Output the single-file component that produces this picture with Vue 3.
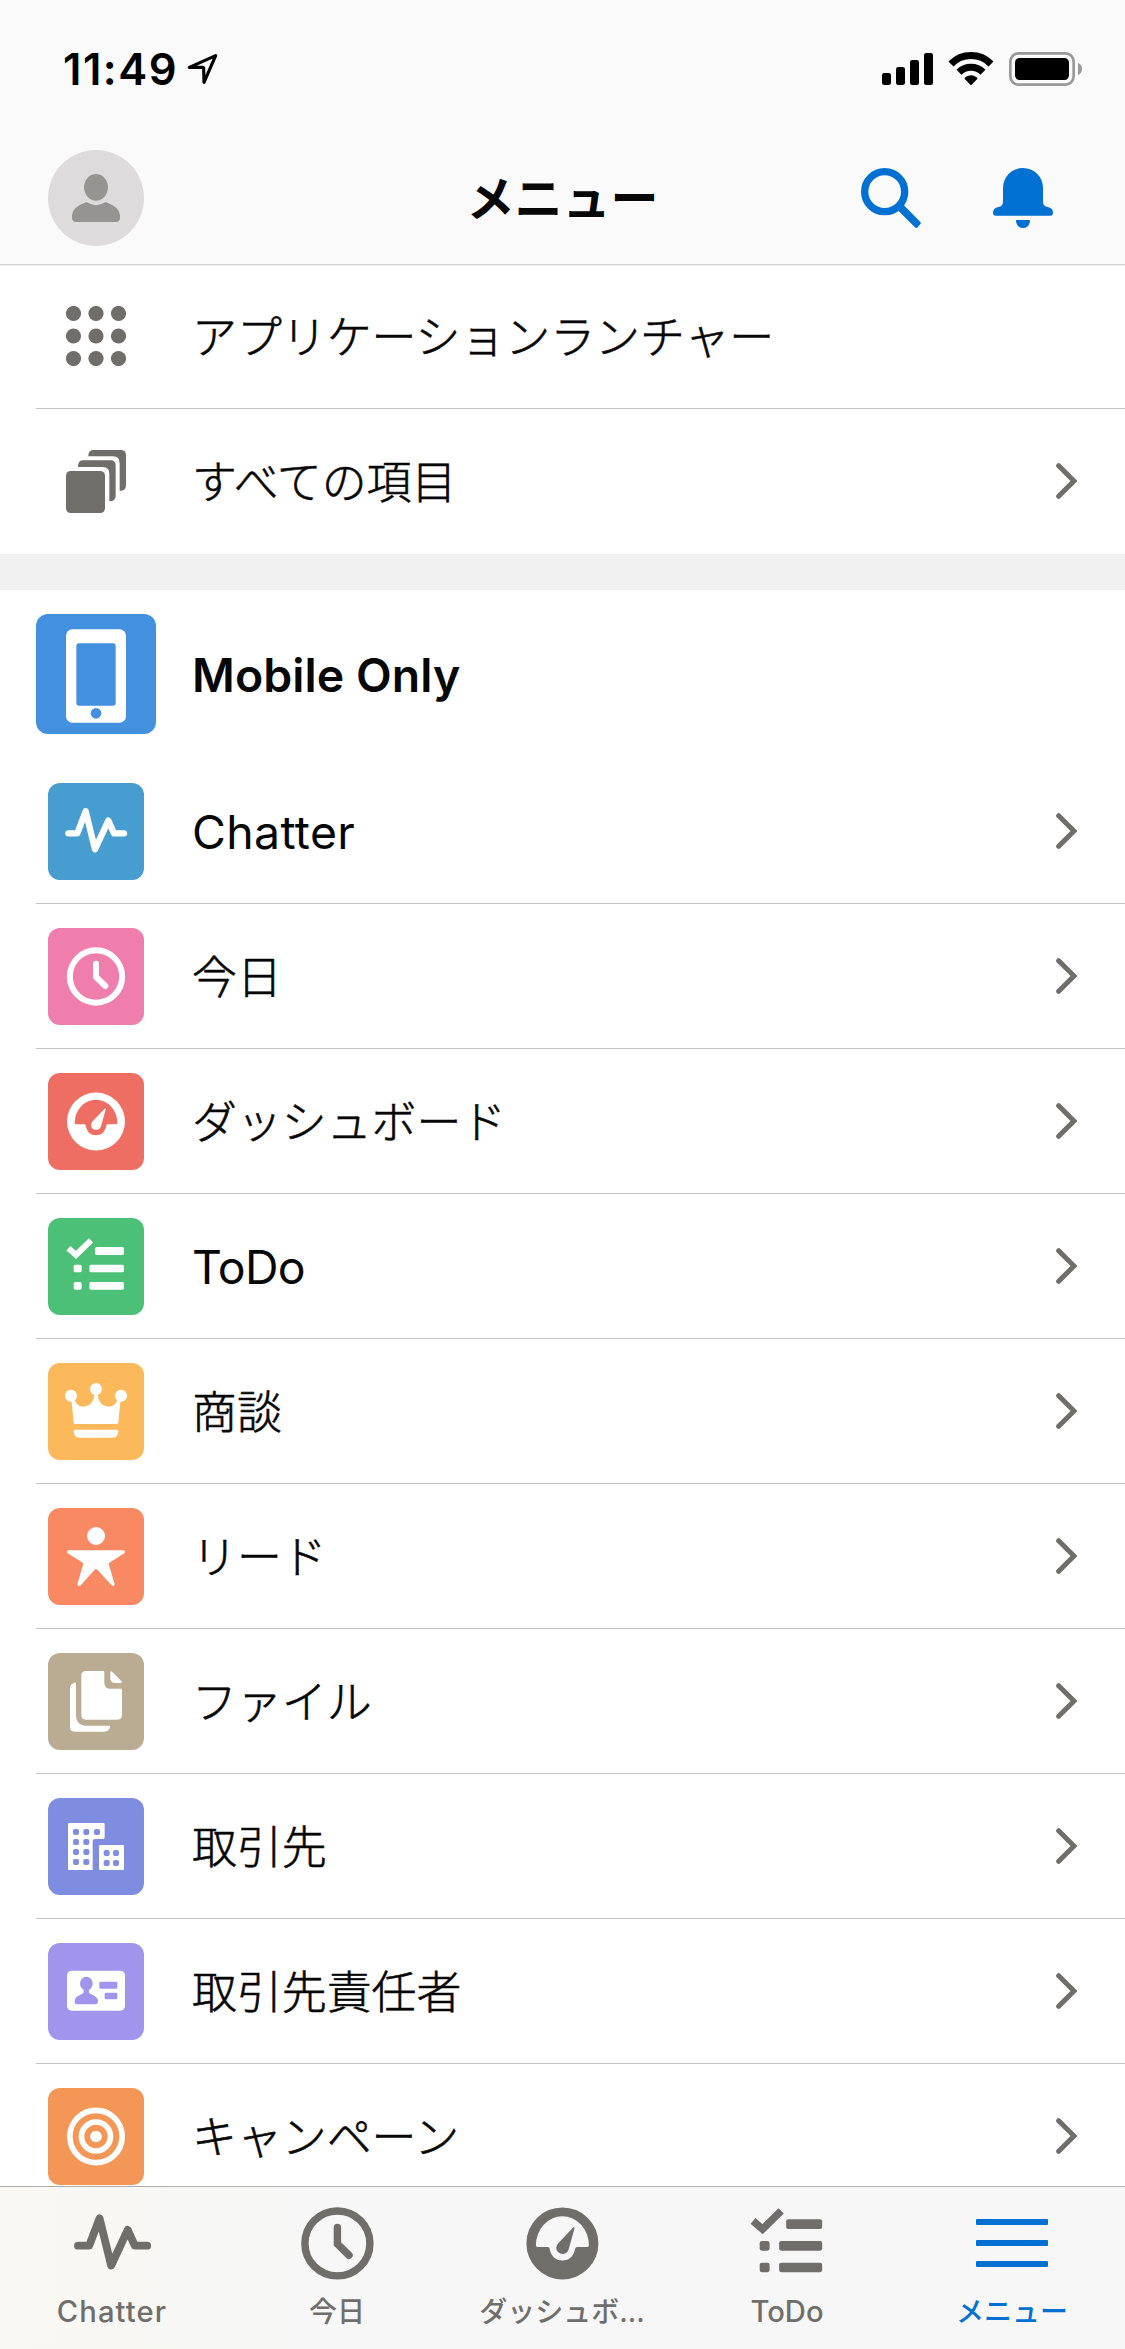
<script setup>
const ring = (r, w) =>
  `<circle cx="144" cy="145.5" r="${r}" fill="none" stroke="currentColor" stroke-width="${w}"/>`

const windows = [
  [84, 102], [115, 102], [147, 102],
  [84, 132], [115, 132],
  [84, 162], [115, 162],
  [84, 192], [115, 192],
  [176, 165], [204, 165],
  [176, 195], [204, 195],
].map(([x, y]) => `<rect x="${x - 9}" y="${y - 9}" width="18" height="18" rx="6" fill="var(--tile)"/>`).join('')

// Glyphs share one 288 x 291 canvas, centred on 144, 145.5.
const glyphs = {
  pulse: '<path d="M61 151H88L113 85L141 199L181 113L198 151H228" fill="none" stroke="currentColor" stroke-width="19" stroke-linecap="round" stroke-linejoin="round"/>',
  clock: ring(78.5, 18) + '<path d="M144 107V147L172 174" fill="none" stroke="currentColor" stroke-width="18" stroke-linecap="round"/>',
  gauge: '<path fill-rule="evenodd" d="M144 58.5a87 87 0 1 1 0 174a87 87 0 1 1 0-174ZM80 150Q80 154 84 154H109Q112 154 113 158Q119 187 144 187Q169 187 175 158Q176 154 179 154H204Q208 154 208 150A64 70 0 0 0 80 150Z"/><path d="M170 107Q174 104 173 110L159 160Q155 171 144 171Q130 169 129 156Q130 149 134 145Z"/>',
  tasks: '<path d="M61 91L84 111L129 67" fill="none" stroke="currentColor" stroke-width="18"/><rect x="141" y="87" width="87" height="24" rx="5"/><rect x="77" y="140" width="24" height="23" rx="5"/><rect x="124" y="140" width="104" height="23" rx="5"/><rect x="77" y="192" width="24" height="23" rx="5"/><rect x="124" y="192" width="104" height="23" rx="5"/>',
  crown: '<circle cx="69" cy="98" r="18"/><circle cx="144" cy="78" r="18"/><circle cx="219" cy="98" r="18"/><path d="M70 108L77 179Q78 183 82 183H206Q210 183 211 179L218 108L208 112Q200 131 183 131Q150 129 149 90H139Q138 129 105 131Q88 131 80 112Z"/><path d="M77 204Q77 200 81 200H207Q211 200 211 204Q210 224 194 224H94Q78 224 77 204Z"/>',
  lead: '<circle cx="144" cy="84" r="27"/><path d="M62 127H226Q234 130 229 136L184 164Q182 167 183 171L200 229Q199 236 192 233L148 185Q144 181 140 185L97 233Q90 236 88 229L105 171Q106 167 104 164L59 136Q54 130 62 127Z"/>',
  files: '<path d="M114 54H166Q169 54 169 58V89Q169 107 187 107H218Q222 107 222 111V186Q222 200 208 200H114Q100 200 100 186V68Q100 54 114 54Z"/><path d="M187 57Q188 53 192 56L221 85Q224 90 218 90H201Q187 90 187 76Z"/><path d="M80 89Q84 88 84 92V190Q86 216 110 218H183Q188 218 186 222Q182 236 170 236H80Q66 236 66 222V104Q67 92 80 89Z"/>',
  building: '<path d="M64 75H166Q170 75 170 79V118Q170 123 166 123H141Q134 123 134 130V216H64Q60 216 60 212V79Q60 75 64 75Z"/><rect x="153" y="141" width="75" height="75" rx="4"/>' + windows,
  card: '<rect x="57" y="83" width="174" height="120" rx="14"/><g fill="var(--tile)"><ellipse cx="115" cy="122" rx="19" ry="21"/><path d="M107 136H123V148Q124 152 130 154Q150 162 150 174V177Q149 184 142 184H88Q81 184 80 177V174Q80 162 100 154Q106 152 107 148Z"/><rect x="154" y="116" width="54" height="21" rx="4"/><rect x="170" y="149" width="38" height="20" rx="4"/></g>',
  target: ring(78.5, 17) + ring(43.5, 17) + '<circle cx="144" cy="145.5" r="17.500"/>',
}

const items = [
  { label: 'Chatter', glyph: 'pulse', color: '#479cd0', latin: 'chatter' },
  { label: '今日', glyph: 'clock', color: '#ef7ead' },
  { label: 'ダッシュボード', glyph: 'gauge', color: '#ef6e64' },
  { label: 'ToDo', glyph: 'tasks', color: '#4bc076', latin: 'todo' },
  { label: '商談', glyph: 'crown', color: '#fcb95b' },
  { label: 'リード', glyph: 'lead', color: '#f88962' },
  { label: 'ファイル', glyph: 'files', color: '#baac93' },
  { label: '取引先', glyph: 'building', color: '#7f8de1' },
  { label: '取引先責任者', glyph: 'card', color: '#a094ed' },
  { label: 'キャンペーン', glyph: 'target', color: '#f49756' },
]

const tabs = [
  { label: 'Chatter', glyph: 'pulse', latin: 'chatter' },
  { label: '今日', glyph: 'clock' },
  { label: 'ダッシュボ...', glyph: 'gauge' },
  { label: 'ToDo', glyph: 'tasks', latin: 'todo' },
  { label: 'メニュー', active: true },
]
</script>

<template>
  <div class="screen">
    <header class="header">
      <div class="status">
        <div class="clock">
          <span class="time">11:49</span>
          <svg width="31" height="32" viewBox="561 158 93 96">
            <path d="M568 201L647 166L612 246L611 204Q611 201 608 201Z" fill="none" stroke="#000" stroke-width="9.500" stroke-linejoin="round" />
          </svg>
        </div>
        <svg class="signals" width="202" height="38" viewBox="246 150 606 114">
          <rect x="246" y="219" width="27" height="36" rx="7" />
          <rect x="288" y="201" width="27" height="54" rx="7" />
          <rect x="330" y="180" width="27" height="75" rx="7" />
          <rect x="372" y="159" width="27" height="96" rx="7" />
          <g fill="none" stroke="#000" stroke-width="21">
            <path d="M453 192A84 84 0 0 1 573 192" />
            <path d="M477 217A51 51 0 0 1 549 217" />
          </g>
          <path d="M495 238Q492 235 496 232Q513 219 530 232Q534 235 531 238L515 254Q513 256 511 254Z" />
          <rect x="631" y="160" width="190" height="94" rx="25" fill="none" stroke="#999" stroke-width="8" />
          <rect x="645" y="174" width="162" height="66" rx="14" />
          <path d="M834 189Q846 194 846 207Q846 220 834 225Z" fill="#999" />
        </svg>
      </div>
      <div class="navbar">
        <svg class="avatar" viewBox="0 0 288 288">
          <circle cx="144" cy="144" r="144" fill="#dddbdc" />
          <g fill="#969492">
            <ellipse cx="144" cy="112" rx="36" ry="40" />
            <path d="M115 156Q144 175 173 156Q216 172 216 196V203Q216 216 203 216H85Q72 216 72 203V196Q72 172 115 156Z" />
          </g>
        </svg>
        <h1 class="title">メニュー</h1>
        <div class="actions">
          <svg width="60" height="60" viewBox="183 504 180 180">
            <circle cx="254" cy="575" r="60" fill="none" stroke="#0070d2" stroke-width="22" />
            <path d="M302 615L311 615L361 666Q364 669 361 672L353 682Q349 686 345 682L295 632Z" fill="#0070d2" />
          </svg>
          <svg width="60" height="60" viewBox="579 504 180 180" fill="#0070d2">
            <path d="M609 564A60 60 0 0 1 729 564V604Q729 620 743 621Q759 624 759 638Q759 647 751 647H587Q579 647 579 638Q579 624 595 621Q609 620 609 604Z" />
            <path d="M651 660H687Q691 660 690 665Q685 684 669 684Q653 684 648 665Q647 660 651 660Z" />
          </svg>
        </div>
      </div>
    </header>

    <main class="content">
      <div class="row launcher">
        <div class="lead-icon">
          <svg width="60" height="60" viewBox="0 0 180 180" fill="#706e6b">
            <template v-for="y in 3" :key="y">
              <circle v-for="x in 3" :key="x" :cx="x * 67.5 - 45" :cy="y * 67.5 - 45" r="22.8" />
            </template>
          </svg>
        </div>
        <div class="body"><span class="label">アプリケーションランチャー</span></div>
      </div>
      <div class="row all-items">
        <div class="lead-icon">
          <svg width="60" height="63" viewBox="198 570 180 189" fill="#706e6b">
            <rect x="198" y="633" width="117" height="126" rx="14" />
            <path d="M234 621V618Q234 601 250 601H331Q347 601 347 617V707Q347 724 328 724V642Q328 621 308 621Z" />
            <path d="M265 589V587Q265 570 281 570H362Q378 570 378 586V676Q378 693 359 693V611Q359 589 339 589Z" />
          </svg>
        </div>
        <div class="body">
          <span class="label">すべての項目</span>
          <svg class="chevron" width="21" height="36" viewBox="168 69 63 108">
            <path d="M176 77L222 123L176 169" />
          </svg>
        </div>
      </div>

      <div class="section-gap"></div>

      <div class="app">
        <svg class="app-icon" viewBox="0 0 360 360">
          <rect x="90" y="46" width="180" height="280" rx="19" fill="#fff" />
          <rect x="121" y="88" width="118" height="187" rx="8" />
          <circle cx="180" cy="298" r="16" />
        </svg>
        <h2 class="app-name">Mobile Only</h2>
      </div>

      <div v-for="item in items" :key="item.label" class="row">
        <div class="lead-icon">
          <div class="tile" :style="{ '--tile': item.color }">
            <svg width="96" height="97" viewBox="0 0 288 291" fill="currentColor" v-html="glyphs[item.glyph]"></svg>
          </div>
        </div>
        <div class="body">
          <span class="label" :class="item.latin && ['latin', item.latin]">{{ item.label }}</span>
          <svg class="chevron" width="21" height="36" viewBox="168 69 63 108">
            <path d="M176 77L222 123L176 169" />
          </svg>
        </div>
      </div>
    </main>

    <nav class="tabbar">
      <div v-for="tab in tabs" :key="tab.label" class="tab" :class="{ active: tab.active }">
        <svg v-if="tab.glyph" class="tab-icon" viewBox="44 45.5 200 200" fill="currentColor" v-html="glyphs[tab.glyph]"></svg>
        <div v-else class="tab-icon burger"><i></i><i></i><i></i></div>
        <span class="tab-label" :class="tab.latin && ['latin', tab.latin]">{{ tab.label }}</span>
      </div>
    </nav>
  </div>
</template>

<style>
body {
  margin: 0;
  background: #fff;
}
</style>

<style scoped>
.screen {
  display: flex;
  flex-direction: column;
  width: 1125px;
  height: 2349px;
  overflow: hidden;
  background: #fff;
  color: #080707;
  font-family: Inter, "Noto Sans CJK JP", sans-serif;
}

svg {
  display: block;
  flex: none;
}

.header {
  flex: none;
  height: 264px;
  background: #fafafa;
  border-bottom: 1px solid #d5d5d5;
  box-shadow: 0 1px 0 #f0f0f0;
  margin-bottom: 1px;
}

.status {
  display: flex;
  justify-content: space-between;
  height: 88px;
  padding: 50px 41px 0 63px;
  box-sizing: border-box;
  color: #000;
}

.clock {
  display: flex;
  gap: 10px;
  height: 38px;
}

.clock svg {
  margin-top: 3px;
}

.time {
  width: 114px;
  font-size: 43.5px;
  font-weight: 600;
  line-height: 38px;
  letter-spacing: 1.5px;
  white-space: nowrap;
}

.navbar {
  display: grid;
  grid-template-columns: 1fr auto 1fr;
  align-items: center;
  height: 96px;
  margin-top: 62px;
  padding: 0 72px 0 48px;
}

.avatar {
  width: 96px;
  height: 96px;
}

.title {
  margin: 2px 0 0 24px;
  font-size: 48px;
  font-weight: 700;
  line-height: 60px;
}

.actions {
  display: flex;
  justify-content: flex-end;
  gap: 72px;
}

.content {
  flex: 1;
  min-height: 0;
  overflow: hidden;
}

.row {
  display: flex;
  align-items: stretch;
  height: 145px;
  padding-left: 36px;
}

.row.launcher {
  height: 143px;
}

.lead-icon {
  display: flex;
  align-items: center;
  justify-content: center;
  width: 120px;
  flex: none;
  box-sizing: border-box;
  border-bottom: 1px solid #c4c4c4;
}

.launcher .lead-icon {
  padding-bottom: 2px;
}

.body {
  display: flex;
  flex: 1;
  align-items: center;
  justify-content: space-between;
  box-sizing: border-box;
  padding: 0 48px 0 36px;
  border-bottom: 1px solid #c4c4c4;
}

.all-items .lead-icon,
.all-items .body {
  border-bottom-color: transparent;
}

.label {
  margin-top: 3px;
  font-size: 44.9px;
  font-weight: 300;
  line-height: 60px;
  white-space: nowrap;
  -webkit-text-stroke: 0.6px currentColor;
}

.launcher .label {
  margin-top: 1px;
}

.label.latin {
  margin-top: 1px;
  font-size: 46.4px;
  font-weight: 400;
  -webkit-text-stroke: 0;
}

.label.chatter {
  letter-spacing: 0.35px;
}

.label.todo {
  letter-spacing: -0.6px;
}

.chevron path {
  fill: none;
  stroke: #706e6b;
  stroke-width: 15;
  stroke-linecap: round;
}

.section-gap {
  height: 36px;
  background: #f1f1f1;
}

.app {
  display: flex;
  align-items: center;
  gap: 36px;
  height: 169px;
  padding: 0 36px 1px;
  box-sizing: border-box;
}

.app-icon {
  width: 120px;
  height: 120px;
  border-radius: 12px;
  background: #4390df;
  fill: #4390df;
}

.app-name {
  margin: 1px 0 0;
  font-size: 46.4px;
  font-weight: 600;
  line-height: 60px;
  letter-spacing: 0.1px;
}

.tile {
  width: 96px;
  height: 97px;
  border-radius: 12px;
  background: var(--tile);
  color: #fff;
}

.tabbar {
  display: flex;
  flex: none;
  height: 163px;
  box-sizing: border-box;
  border-top: 1px solid #adadad;
  background: linear-gradient(90deg, #faf8f2 0, #f7f7f5 180px, #f7f7f7 300px);
}

.tab {
  display: flex;
  flex-direction: column;
  align-items: center;
  width: 225px;
  padding: 15px 1px 0 0;
  box-sizing: border-box;
  color: #706e6b;
}

.tab.active {
  color: #0070d2;
}

.tab-icon {
  width: 82.8px;
  height: 82.8px;
  flex: none;
}

.burger {
  display: flex;
  flex-direction: column;
  align-items: center;
  justify-content: center;
  gap: 15px;
}

.burger i {
  width: 72px;
  height: 6px;
  border-radius: 1px;
  background: currentColor;
}

.tab-label {
  margin-top: 7px;
  font-size: 28px;
  font-weight: 500;
  line-height: 40px;
  white-space: nowrap;
}

.tab-label.latin {
  font-size: 29.2px;
}

.tab-label.chatter {
  letter-spacing: 1.1px;
}
</style>
